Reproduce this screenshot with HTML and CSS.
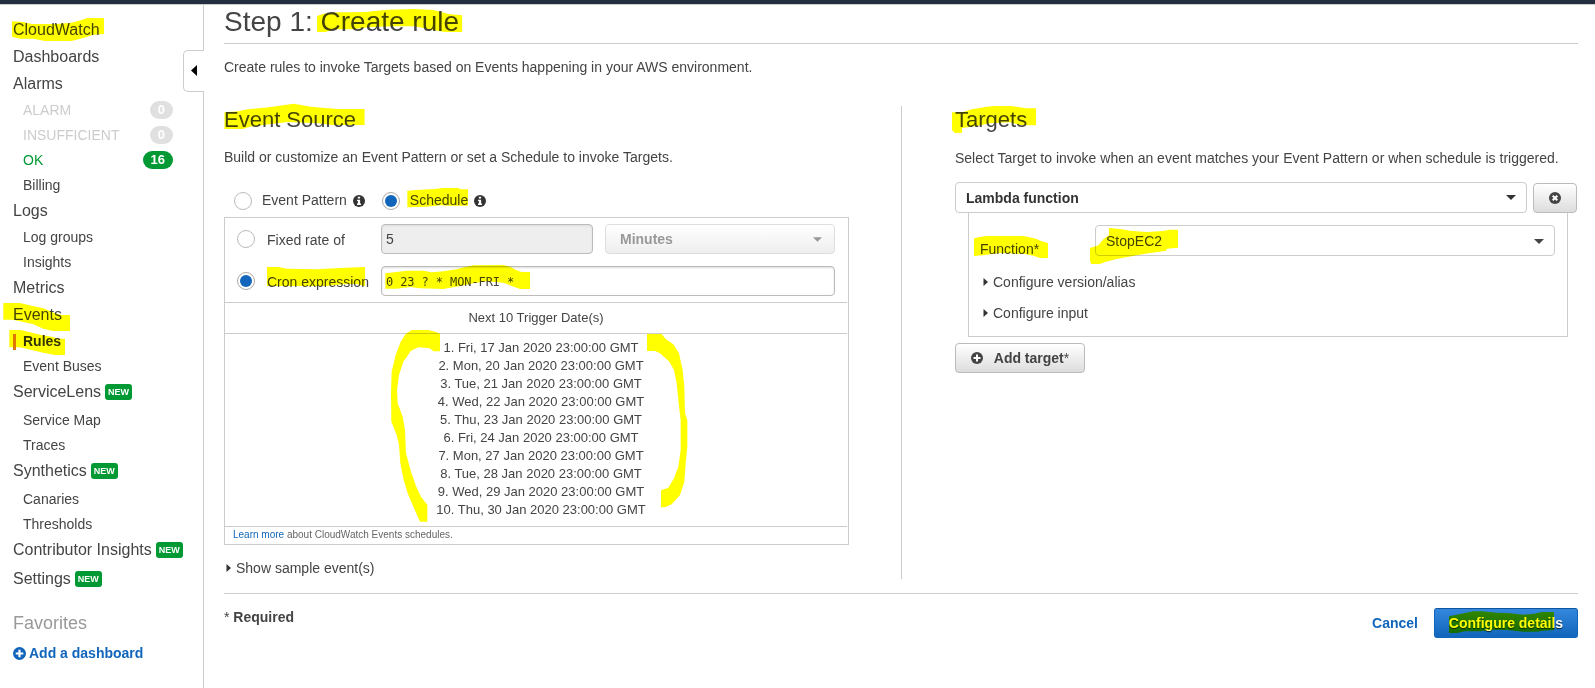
FILE: index.html
```html
<!DOCTYPE html>
<html lang="en">
<head>
<meta charset="utf-8">
<title>CloudWatch - Create rule</title>
<link rel="stylesheet" href="styles.css">
</head>
<body>
<svg class="defs" width="0" height="0">
  <symbol id="info" viewBox="0 0 12 12"><circle cx="6" cy="6" r="6" fill="#333"/><path d="M4.8 1.8h2.3v1.8H4.8zM4 4.7h3.1v3.8H8V10H4V8.500h.9V6.100H4z" fill="#fff"/></symbol>
  <symbol id="plus" viewBox="0 0 12 12"><circle cx="6" cy="6" r="6" fill="currentColor"/><path d="M5 2.500h2V5h2.500v2H7v2.500H5V7H2.500V5H5z" fill="#fff"/></symbol>
  <symbol id="cross" viewBox="0 0 12 12"><circle cx="6" cy="6" r="6" fill="#444"/><path d="M3.700 3.700l4.600 4.600M8.300 3.700L3.700 8.300" stroke="#fff" stroke-width="2"/></symbol>
  <symbol id="caret" viewBox="0 0 10 5"><path d="M0 0h10L5 5z" fill="currentColor"/></symbol>
  <symbol id="right" viewBox="0 0 5 8"><path d="M.5 0L5 4 .5 8z" fill="#333"/></symbol>
</svg>
<div class="topbar"></div>
<div class="layout">
  <nav class="sidebar">
    <div class="item">CloudWatch</div>
    <div class="item">Dashboards</div>
    <div class="item">Alarms</div>
    <div class="sub muted">ALARM<span class="count">0</span></div>
    <div class="sub muted">INSUFFICIENT<span class="count">0</span></div>
    <div class="sub ok">OK<span class="count green">16</span></div>
    <div class="sub">Billing</div>
    <div class="item">Logs</div>
    <div class="sub">Log groups</div>
    <div class="sub">Insights</div>
    <div class="item">Metrics</div>
    <div class="item">Events</div>
    <div class="sub current">Rules</div>
    <div class="sub">Event Buses</div>
    <div class="item tagged">ServiceLens<span class="new">NEW</span></div>
    <div class="sub">Service Map</div>
    <div class="sub">Traces</div>
    <div class="item tagged">Synthetics<span class="new">NEW</span></div>
    <div class="sub">Canaries</div>
    <div class="sub">Thresholds</div>
    <div class="item tagged">Contributor Insights<span class="new">NEW</span></div>
    <div class="item tagged">Settings<span class="new">NEW</span></div>
    <div class="favorites">Favorites</div>
    <div class="add"><svg width="13" height="13"><use href="#plus"/></svg>Add a dashboard</div>
    <div class="collapse"><svg width="6" height="11" viewBox="0 0 6 11"><path d="M6 0v11L0 5.500z"/></svg></div>
  </nav>
  <main class="main">
    <h1>Step 1: Create rule</h1>
    <p class="lead">Create rules to invoke Targets based on Events happening in your AWS environment.</p>
    <div class="columns">
      <section class="source">
        <h2>Event Source</h2>
        <p class="desc">Build or customize an Event Pattern or set a Schedule to invoke Targets.</p>
        <div class="modes">
          <span class="radio"></span><span class="mode">Event Pattern</span><svg width="12" height="12"><use href="#info"/></svg>
          <span class="radio on second"></span><span class="mode">Schedule</span><svg width="12" height="12"><use href="#info"/></svg>
        </div>
        <div class="schedule">
          <div class="line">
            <span class="radio"></span><span class="label">Fixed rate of</span>
            <div class="field disabled">5</div>
            <div class="select off">Minutes<svg width="9" height="5"><use href="#caret"/></svg></div>
          </div>
          <div class="line">
            <span class="radio on"></span><span class="label">Cron expression</span>
            <div class="field cron">0 23 ? * MON-FRI *</div>
          </div>
          <div class="next">Next 10 Trigger Date(s)</div>
          <div class="dates">
            <div>1. Fri, 17 Jan 2020 23:00:00 GMT</div>
            <div>2. Mon, 20 Jan 2020 23:00:00 GMT</div>
            <div>3. Tue, 21 Jan 2020 23:00:00 GMT</div>
            <div>4. Wed, 22 Jan 2020 23:00:00 GMT</div>
            <div>5. Thu, 23 Jan 2020 23:00:00 GMT</div>
            <div>6. Fri, 24 Jan 2020 23:00:00 GMT</div>
            <div>7. Mon, 27 Jan 2020 23:00:00 GMT</div>
            <div>8. Tue, 28 Jan 2020 23:00:00 GMT</div>
            <div>9. Wed, 29 Jan 2020 23:00:00 GMT</div>
            <div>10. Thu, 30 Jan 2020 23:00:00 GMT</div>
          </div>
          <div class="learn"><a>Learn more</a> about CloudWatch Events schedules.</div>
        </div>
        <div class="expander sample"><svg width="5" height="8"><use href="#right"/></svg>Show sample event(s)</div>
      </section>
      <section class="targets">
        <h2>Targets</h2>
        <p class="desc">Select Target to invoke when an event matches your Event Pattern or when schedule is triggered.</p>
        <div class="picker">
          <div class="select strong">Lambda function<svg width="10" height="5"><use href="#caret"/></svg></div>
          <div class="button remove"><svg width="12" height="12"><use href="#cross"/></svg></div>
        </div>
        <div class="config">
          <div class="function"><span>Function*</span><div class="select">StopEC2<svg width="10" height="5"><use href="#caret"/></svg></div></div>
          <div class="expander"><svg width="5" height="8"><use href="#right"/></svg>Configure version/alias</div>
          <div class="expander"><svg width="5" height="8"><use href="#right"/></svg>Configure input</div>
        </div>
        <div class="button add-target"><svg width="12" height="12"><use href="#plus"/></svg><span>Add target<span class="star">*</span></span></div>
      </section>
    </div>
    <footer class="footer">
      <div class="required"><span>*</span> Required</div>
      <div class="actions"><a>Cancel</a><div class="primary">Configure details</div></div>
    </footer>
  </main>
</div>
<svg class="marker" width="1595" height="688">
  <g transform="scale(.33333)">
    <path d="M36 64L70 66 95 72H170L215 68 245 60 262 54H312V102L280 104 250 114 215 123H135L100 116H60L36 110z"/>
  </g>
  <g transform="translate(0 220) scale(.33333)">
    <path d="M10 249H60L95 257 130 265 165 280 185 285H210V333H160L130 326 100 313 60 304 38 299H10z"/>
    <path d="M28 330H62L90 337 120 344 155 350 175 356H195V405H165L130 398 95 390 60 382H28z"/>
  </g>
  <g transform="translate(200 0) scale(.38265 .33333)">
    <path d="M306 48L320 42 360 37H385L430 36 490 29 560 27 610 30 650 42 685 46V96H640L600 88 560 79H500L440 82 400 88H350L328 96H306z"/>
    <path d="M64 337L100 334 125 328 180 322 245 311 290 320 335 325 360 327H430V375H345L310 370 230 366 180 373 130 380 112 387H64z"/>
  </g>
  <g transform="translate(210 180) scale(.33333)">
    <path d="M592 32L620 30 675 27 700 24H745L752 28H774V77H715L690 76 650 80 592 82z"/>
    <path d="M171 261H205L230 266 320 268 390 264 465 261V319L440 312 400 313 350 318H171z"/>
    <path d="M526 280L560 276 590 272 640 272 665 277 700 274 740 268 765 261 790 256 880 255 900 260 918 270 935 276H960V327H930L905 318 880 308 830 304 790 310 750 318 700 327 630 325 600 321 560 326H526z"/>
  </g>
  <g transform="translate(370 320) scale(.33333)">
    <path d="M210 41L198 36 175 30H125L107 42 92 65 77 105 65 155 63 220 64 305 80 345 87 375 91 430 101 480 113 520 132 565 150 605H172V555L153 530 138 498 123 455 108 400 105 330 98 290 83 250 81 210 87 165 100 125 123 92 145 82 180 85 190 94H210z"/>
    <path d="M831 42H875L887 57 910 73 927 100 938 150 943 200 945 280 952 300V380L947 430 943 485 930 525 905 553 885 562H873V511L895 503 912 475 925 440 932 390V300L926 250 920 190 912 150 897 124 870 100 855 93H831z"/>
  </g>
  <g transform="translate(900 90) scale(.33333)">
    <path d="M156 67L190 66 215 58 260 50 285 48H335L380 55H408V106L360 105 330 97 270 100 230 108 186 114V128L165 129 156 120z"/>
    <path d="M222 445L240 441 260 438H370L395 443 410 447 425 454 444 459V504H420L400 497 375 492 300 489 250 496 222 498z"/>
    <path d="M570 474L595 466 610 448 627 436V414L660 417 690 422 740 426 790 423 808 419H834V473L800 476V482L750 489 710 496 650 507 615 516 600 522H573L570 510z"/>
  </g>
  <g transform="translate(1340 570) scale(.33333)">
    <path d="M327 139L350 134 375 129 400 124H425L470 128 510 130 550 134 580 132 605 126H642V180L610 182 590 185H550L500 180 465 179 420 184 375 184 350 189H327z"/>
  </g>
</svg>
</body>
</html>
```
FILE: styles.css
```css
* { box-sizing: border-box; }
body { margin: 0; height: 688px; overflow: hidden; position: relative; background: #fff; color: #444; font: 14px/20px "Liberation Sans", Arial, sans-serif; }
h1, h2, p { margin: 0; font-weight: normal; }
svg { display: block; flex: none; }
.defs { position: absolute; }
a { color: #1166bb; }
.topbar { height: 5px; background: #232f3e; border-bottom: 1px solid #ccc; }
.layout { display: flex; height: 683px; }

.sidebar { position: relative; flex: none; width: 204px; padding: 11px 0 0 13px; border-right: 1px solid #ccc; }
.item { display: flex; align-items: center; font-size: 16px; line-height: 27px; }
.tagged { padding-bottom: 2px; }
.sub { display: flex; align-items: center; justify-content: space-between; height: 25px; padding: 2px 30px 0 10px; line-height: 23px; }
.muted { color: #ccc; }
.ok { color: #093; }
.current { justify-content: flex-start; padding-left: 0; font-weight: bold; color: #333; }
.current::before { content: ""; width: 3px; height: 16px; margin-right: 7px; background: #e07700; }
.count { height: 18px; margin-top: -1px; padding: 0 8px; border-radius: 9px; background: #e0e0e0; color: #fff; font-weight: bold; font-size: 13px; line-height: 17px; }
.count.green { background: #093; }
.new { height: 16px; margin-left: 4px; padding: 0 3px; border-radius: 3px; background: #093; color: #fff; font-size: 9px; font-weight: bold; line-height: 16px; }
.favorites { margin-top: 17px; font-size: 18px; line-height: 24px; color: #999; }
.add { display: flex; align-items: center; gap: 3px; margin-top: 8px; color: #1166bb; font-weight: bold; }
.collapse { position: absolute; right: -1px; top: 45px; width: 21px; height: 42px; padding: 14px 0 0 7px; background: #fff; border: 1px solid #ccc; border-right: 0; border-radius: 5px 0 0 5px; }

.main { flex: 1; padding: 0 17px 0 20px; }
h1 { height: 39px; padding-top: 1px; border-bottom: 1px solid #ccc; font-size: 28px; line-height: 32px; }
.lead { margin-top: 13px; }
.columns { display: flex; height: 473px; margin-top: 29px; }
h2 { padding-top: 1px; font-size: 22px; line-height: 26px; }
.source { width: 678px; border-right: 1px solid #ccc; }
.source .desc { margin-top: 14px; }
.modes { display: flex; height: 20px; margin-top: 23px; padding-left: 10px; align-items: center; }
.modes .radio { margin-top: 2px; }
.modes svg { margin-top: 1px; }
.mode { margin: 0 6px 0 10px; }
.modes .second { margin-left: 17px; }
.radio { flex: none; width: 18px; height: 18px; border: 1px solid #bbb; border-radius: 50%; background: #fff; }
.radio.on { padding: 2px; background: #1166bb content-box; border-color: #aaa; }
.schedule { width: 625px; height: 328px; margin-top: 7px; border: 1px solid #ccc; }
.line { display: flex; align-items: center; height: 42px; padding-left: 12px; }
.line .label { width: 114px; margin-left: 12px; padding-top: 2px; white-space: nowrap; }
.field { width: 212px; height: 30px; padding-left: 4px; border: 1px solid #bbb; border-radius: 4px; line-height: 28px; box-shadow: inset 0 1px 2px #ddd; }
.disabled { background: #eee; }
.cron { width: 454px; padding-top: 1px; font: 12px/28px "DejaVu Sans Mono", monospace; letter-spacing: -0.1px; }
.select { display: flex; align-items: center; justify-content: space-between; height: 31px; padding: 0 10px; border: 1px solid #ccc; border-radius: 4px; background: #fff; }
.off { width: 230px; height: 30px; margin-left: 12px; padding: 0 12px 0 14px; border-color: #ddd; background: linear-gradient(#fff, #eee); color: #999; font-weight: bold; }
.next { width: 622px; height: 32px; border: solid #ccc; border-width: 1px 0; text-align: center; font-size: 13px; line-height: 29px; }
.dates { width: 622px; height: 193px; padding: 5px 0 0 10px; border-bottom: 1px solid #ccc; text-align: center; font-size: 13px; line-height: 18px; }
.learn { padding-left: 8px; font-size: 10px; line-height: 16px; color: #666; }
.expander { display: flex; align-items: center; gap: 5px; }
.sample { margin-top: 13px; padding-left: 2px; }
.targets { width: 623px; margin-left: 53px; }
.targets .desc { margin-top: 15px; white-space: nowrap; }
.picker { display: flex; align-items: flex-end; gap: 6px; margin-top: 14px; }
.strong { width: 572px; font-weight: bold; color: #333; }
.button { display: flex; align-items: center; justify-content: center; height: 30px; border: 1px solid #bbb; border-radius: 4px; background: linear-gradient(#fff, #ddd); color: #444; font-weight: bold; }
.remove { width: 44px; }
.config { width: 600px; height: 124px; margin-left: 13px; padding: 12px 12px 0 11px; border: 1px solid #ccc; border-top: 0; }
.function { display: flex; height: 31px; margin-bottom: 16px; }
.function > span { width: 115px; padding-top: 14px; }
.function .select { width: 460px; padding-top: 1px; }
.config .expander { margin-bottom: 11px; padding-left: 3px; }
.add-target { width: 130px; margin-top: 6px; gap: 11px; }
.star { font-weight: normal; }
.footer { display: flex; justify-content: space-between; margin-top: 14px; padding-top: 14px; border-top: 1px solid #ccc; }
.required { margin-top: -1px; font-weight: bold; }
.required span { font-weight: normal; }
.actions { display: flex; align-items: center; gap: 16px; font-weight: bold; }
.primary { width: 144px; height: 30px; border: 1px solid; border-color: #0d559e #1166bb #1166bb; border-radius: 3px; background: linear-gradient(#3388dd, #1166bb); color: #fff; text-align: center; line-height: 28px; text-shadow: 0 1px 1px #023; }
.marker { position: absolute; inset: 0; fill: #ff0; mix-blend-mode: multiply; pointer-events: none; }
```
